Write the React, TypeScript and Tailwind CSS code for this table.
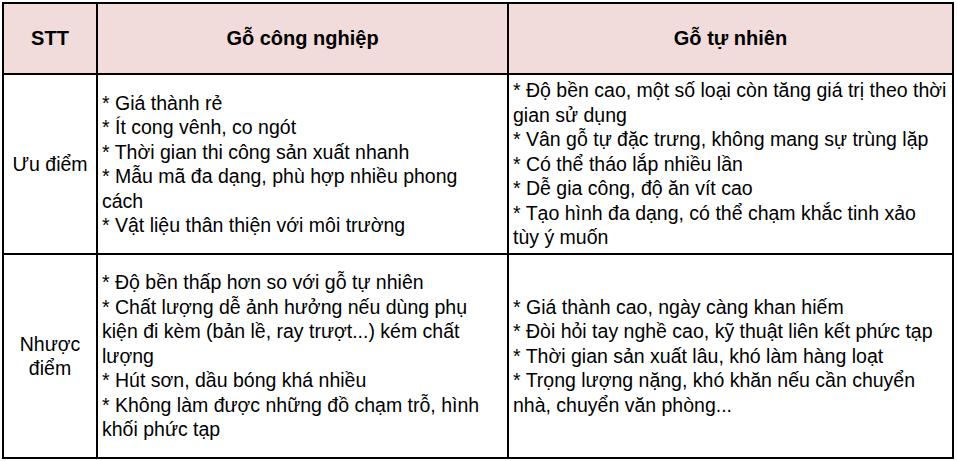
import React from "react";

const font = { fontFamily: '"Liberation Sans", Arial, sans-serif' };

function Lines({ lines }: { lines: string[] }) {
  return (
    <div className="whitespace-nowrap">
      {lines.map((l, i) => (
        <div key={i}>{l}</div>
      ))}
    </div>
  );
}

export default function App() {
  return (
    <div className="w-[957px] h-[461px] bg-white text-black" style={font}>
      <div className="ml-[2px] pt-[2px]">
        <div className="w-[952px] border-t-2 border-l-2 border-black grid grid-cols-[94px_411px_445px] grid-rows-[71px_180px_204px] text-[19.5px] leading-[24.5px]">
          {/* header */}
          <div className="bg-[#f2dcdb] border-r-2 border-b-2 border-black flex items-center justify-center font-bold text-[20px]">
            STT
          </div>
          <div className="bg-[#f2dcdb] border-r-2 border-b-2 border-black flex items-center justify-center font-bold text-[20px]">
            Gỗ công nghiệp
          </div>
          <div className="bg-[#f2dcdb] border-r-2 border-b-2 border-black flex items-center justify-center font-bold text-[20px]">
            Gỗ tự nhiên
          </div>

          {/* row 1 */}
          <div className="border-r-2 border-b-2 border-black flex items-center justify-center text-center px-1">
            Ưu điểm
          </div>
          <div className="border-r-2 border-b-2 border-black flex items-center pl-1 pr-1">
            <Lines
              lines={[
                "* Giá thành rẻ",
                "* Ít cong vênh, co ngót",
                "* Thời gian thi công sản xuất nhanh",
                "* Mẫu mã đa dạng, phù hợp nhiều phong",
                "cách",
                "* Vật liệu thân thiện với môi trường",
              ]}
            />
          </div>
          <div className="border-r-2 border-b-2 border-black flex items-center pl-1 pr-1">
            <Lines
              lines={[
                "* Độ bền cao, một số loại còn tăng giá trị theo thời",
                "gian sử dụng",
                "* Vân gỗ tự đặc trưng, không mang sự trùng lặp",
                "* Có thể tháo lắp nhiều lần",
                "* Dễ gia công, độ ăn vít cao",
                "* Tạo hình đa dạng, có thể chạm khắc tinh xảo",
                "tùy ý muốn",
              ]}
            />
          </div>

          {/* row 2 */}
          <div className="border-r-2 border-b-2 border-black flex items-center justify-center text-center px-1">
            <div>
              <div>Nhược</div>
              <div>điểm</div>
            </div>
          </div>
          <div className="border-r-2 border-b-2 border-black flex items-center pl-1 pr-1">
            <Lines
              lines={[
                "* Độ bền thấp hơn so với gỗ tự nhiên",
                "* Chất lượng dễ ảnh hưởng nếu dùng phụ",
                "kiện đi kèm (bản lề, ray trượt...) kém chất",
                "lượng",
                "* Hút sơn, dầu bóng khá nhiều",
                "* Không làm được những đồ chạm trỗ, hình",
                "khối phức tạp",
              ]}
            />
          </div>
          <div className="border-r-2 border-b-2 border-black flex items-center pl-1 pr-1">
            <Lines
              lines={[
                "* Giá thành cao, ngày càng khan hiếm",
                "* Đòi hỏi tay nghề cao, kỹ thuật liên kết phức tạp",
                "* Thời gian sản xuất lâu, khó làm hàng loạt",
                "* Trọng lượng nặng, khó khăn nếu cần chuyển",
                "nhà, chuyển văn phòng...",
              ]}
            />
          </div>
        </div>
      </div>
    </div>
  );
}
